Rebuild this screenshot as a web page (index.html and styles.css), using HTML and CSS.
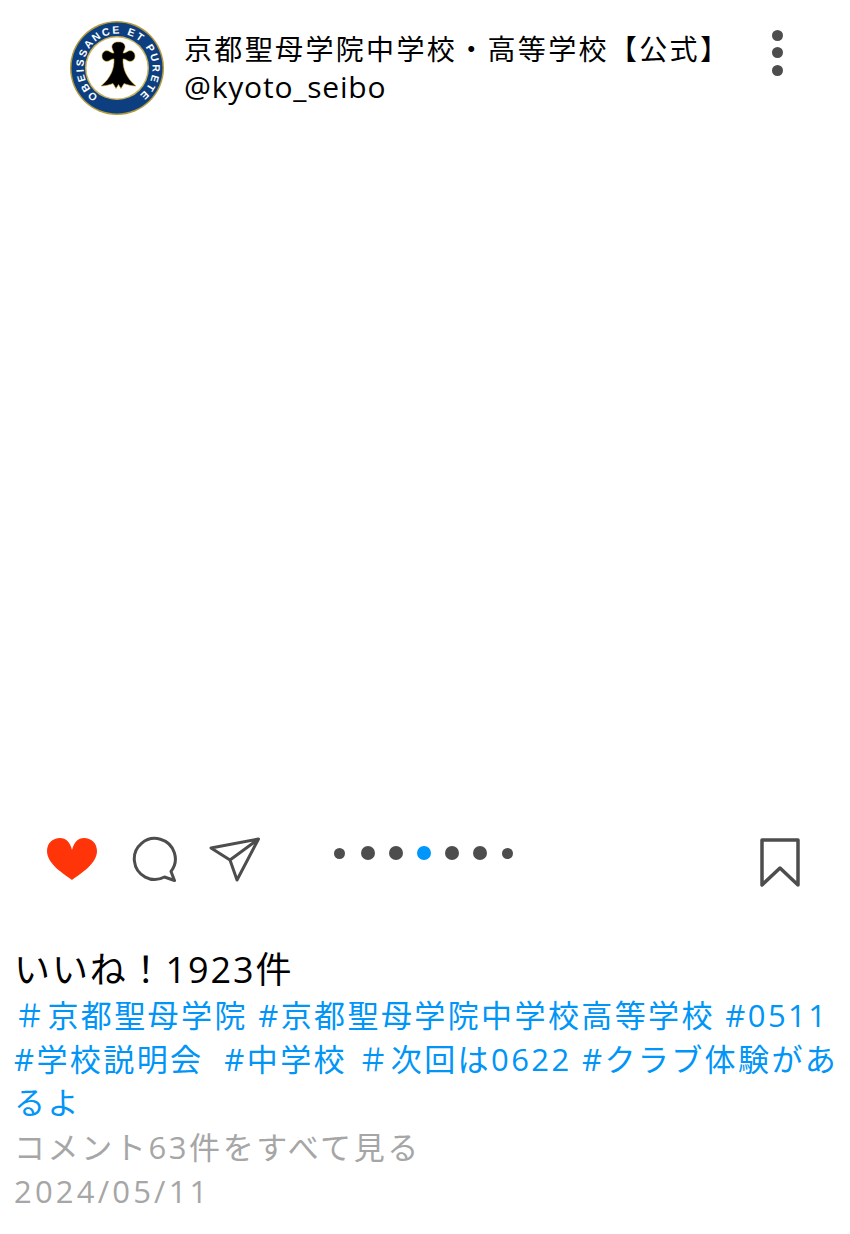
FILE: index.html
```html
<!DOCTYPE html>
<html lang="ja">
<head>
<meta charset="utf-8">
<title>京都聖母学院中学校・高等学校</title>
<link rel="stylesheet" href="styles.css">
</head>
<body>
<main class="post">
  <header class="head">
    <svg class="avatar" viewBox="0 0 96 96" width="96" height="96">
      <defs><path id="ring" d="M28.200 76.300A34.500 34.500 0 1 1 67.800 76.300"/></defs>
      <circle cx="47" cy="48" r="47" fill="#b39a3c"/>
      <circle cx="47" cy="48" r="45.500" fill="#0d3f80"/>
      <circle cx="47" cy="48" r="32" fill="#c9b35a"/>
      <circle cx="47" cy="48" r="30.500" fill="#fff"/>
      <text class="avatar-text"><textPath href="#ring" textLength="172">OBEISSANCE ET PURETE</textPath></text>
      <path d="M47.500 22c-3.500 0-6 2.500-5.500 5.500c.3 2 1.500 3.500 2 5.500c-2 .5-3.500-1-5.500-2c-3-1.200-6.500 1-6.500 5s3.500 6.200 6.500 5c2-1 3.500-2.500 5.500-2c.5 9-3 19-13 27c4 0 8-1 12-2.500l3 5l2.500-4l2.500 4l3-5c4 1.500 8 2.500 12 2.500c-10-8-13.500-18-13-27c2-.5 3.500 1 5.500 2c3 1.200 6.500-1 6.500-5s-3.500-6.200-6.500-5c-2 1-3.500 2.500-5.500 2c.5-2 1.700-3.500 2-5.500c.5-3-2-5.500-5.500-5.500z" fill="#000" stroke="#c9a227" stroke-width=".6"/>
    </svg>
    <div class="who">
      <div class="name">京都聖母学院中学校・高等学校【公式】</div>
      <div class="handle">@kyoto_seibo</div>
    </div>
    <div class="more"><i></i><i></i><i></i></div>
  </header>
  <div class="media"></div>
  <div class="actions">
    <div class="icons">
      <svg class="ic-heart" viewBox="0 0 50 42" width="50" height="42"><path d="M25 42C17 36 0 26 0 13C0 5 6 0 13 0C19 0 23 4 25 12C27 4 31 0 37 0C44 0 50 5 50 13C50 26 33 36 25 42Z" fill="#ff3509"/></svg>
      <svg class="ic-comment" viewBox="0 0 48 48" width="48" height="48"><path d="M34.500 41A20.500 20.500 0 1 1 41 35.500L44.500 44.500Z" fill="none" stroke="#4d4d4d" stroke-width="3" stroke-linejoin="round"/></svg>
      <svg class="ic-send" viewBox="0 0 53 48" width="53" height="48"><path d="M50.500 3L3 12L22 24L29 44ZM22 24L50.500 3" fill="none" stroke="#4d4d4d" stroke-width="3" stroke-linejoin="round"/></svg>
    </div>
    <div class="dots">
      <i class="s"></i><i></i><i></i><i class="on"></i><i></i><i></i><i class="s"></i>
    </div>
    <svg class="ic-save" viewBox="0 0 40 50" width="40" height="50"><path d="M2 2H38V47L20 30L2 47Z" fill="none" stroke="#4d4d4d" stroke-width="3.500" stroke-linejoin="round"/></svg>
  </div>
  <section class="info">
    <div class="likes">いいね！1923件</div>
    <p class="tags">＃京都聖母学院 #京都聖母学院中学校高等学校 #0511 #学校説明会&nbsp; #中学校 ＃次回は0622 #クラブ体験があるよ</p>
    <div class="meta">コメント63件をすべて見る</div>
    <div class="meta date">2024/05/11</div>
  </section>
</main>
</body>
</html>
```
FILE: styles.css
```css
* { box-sizing: border-box; }
html, body { margin: 0; background: #fff; }
body { font-family: "Open Sans", "Noto Sans CJK JP", sans-serif; width: 850px; height: 1234px; overflow: hidden; }
.post { display: flex; flex-direction: column; }
.head { display: flex; align-items: center; height: 135px; padding: 0 0 0 70px; }
.avatar { flex: none; width: 96px; height: 96px; margin-top: 1px; }
.avatar-text { font: 700 10.500px "Liberation Sans", sans-serif; fill: #fff; }
.who { margin-left: 18px; width: 570px; color: #000; }
.name { font-size: 28px; line-height: 37px; letter-spacing: 2.350px; white-space: nowrap; }
.handle { font-size: 30px; line-height: 37px; letter-spacing: .8px; }
.more { display: flex; flex-direction: column; gap: 6.400px; align-self: flex-start; margin: 30px 0 0 18px; }
.more i { display: block; width: 11px; height: 11px; border-radius: 50%; background: #4d4d4d; }
.media { height: 701px; }
.actions { display: flex; align-items: flex-start; height: 110px; padding: 0 50px 0 47px; }
.icons { display: flex; align-items: flex-start; width: 278px; }
.ic-heart { margin-top: 2px; }
.ic-comment { margin-left: 33px; }
.ic-send { margin-left: 30px; }
.dots { display: flex; align-items: center; height: 34px; margin-left: .5px; }
.dots i { display: block; width: 14px; height: 14px; margin: 0 7px; border-radius: 50%; background: #4d4d4d; }
.dots i.s { width: 11px; height: 11px; margin: 0 8.500px; }
.dots i.on { background: #0096fb; }
.ic-save { margin: 2px 0 0 auto; }
.info { padding: 0 6px 0 14px; }
.likes { font-size: 36px; line-height: 48px; letter-spacing: 1.900px; color: #000; }
.tags { margin: 0; font-size: 31px; line-height: 43.500px; letter-spacing: 2.400px; color: #0095f6; }
.meta { font-size: 31px; line-height: 44.500px; letter-spacing: 2.600px; color: #a6a6a6; }
.date { letter-spacing: 3.200px; }
```
